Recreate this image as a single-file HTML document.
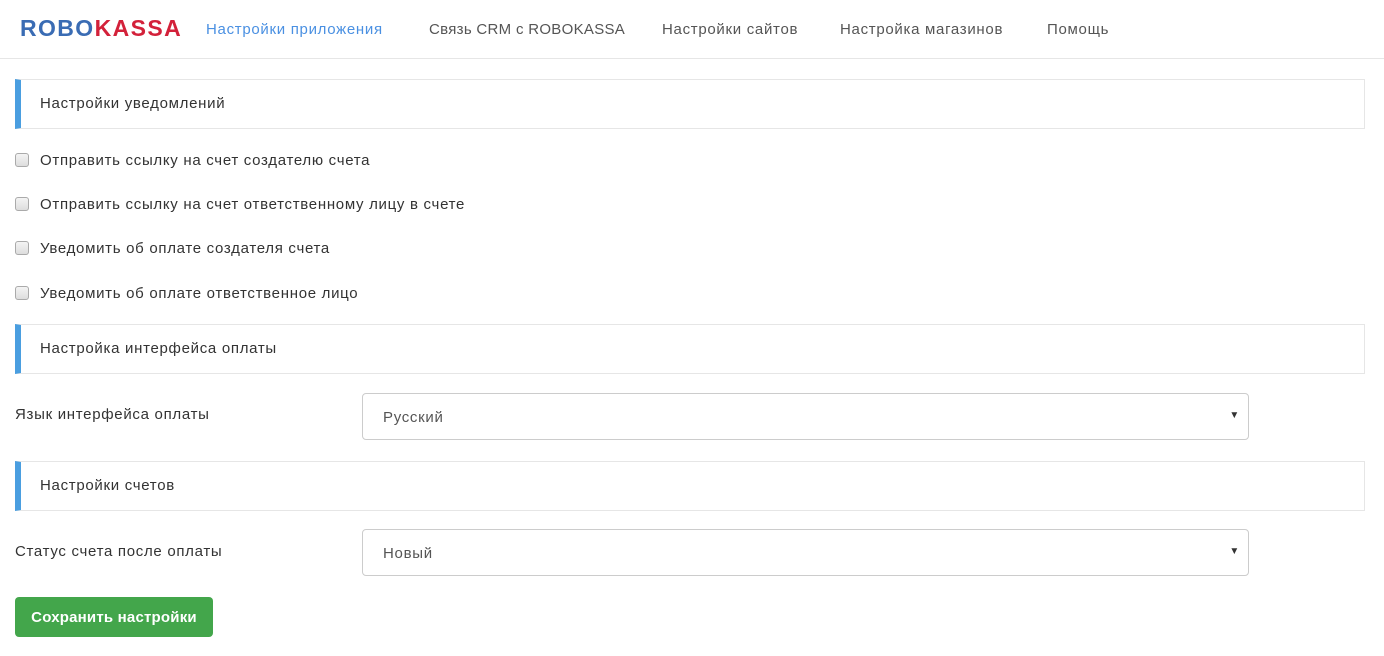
<!DOCTYPE html>
<html><head><meta charset="utf-8"><style>
body{margin:0;width:1384px;height:656px;background:#fff;font-family:"Liberation Sans","DejaVu Sans",sans-serif;color:#333;font-size:15px;letter-spacing:0.7px;position:relative;overflow:hidden}
.a{position:absolute;white-space:nowrap}
.nav{position:absolute;top:0;left:0;width:1384px;height:58px;border-bottom:1px solid #e6e6e6}
.logo{left:20px;top:15px;font-size:23px;font-weight:bold;letter-spacing:1.4px}
.hd{position:absolute;left:15px;width:1350px;height:50px;border:1px solid #e6e6e6;border-left:6px solid #4a9ee0;box-sizing:border-box}
.hd span{position:absolute;left:19px;top:15px}
.cb{position:absolute;left:15px;width:12px;height:12px;border:1px solid #aaa;border-radius:3px;background:linear-gradient(#f4f4f4,#ddd)}
.sel{position:absolute;left:362px;width:887px;height:47px;border:1px solid #ccc;border-radius:4px;box-sizing:border-box}
.sel span{position:absolute;left:20px;top:15px;color:#555}
.sel i{position:absolute;right:8px;top:16px;font-style:normal;font-size:10px;color:#333}
</style></head><body>
<div class="nav"></div>
<div class="a logo"><span style="color:#3a6cb4">ROBO</span><span style="color:#d3213a">KASSA</span></div>
<div class="a" style="left:206px;top:21px;color:#4a90e2">Настройки приложения</div>
<div class="a" style="left:429px;top:21px;color:#555;letter-spacing:0.3px">Связь CRM с ROBOKASSA</div>
<div class="a" style="left:662px;top:21px;color:#555">Настройки сайтов</div>
<div class="a" style="left:840px;top:21px;color:#555">Настройка магазинов</div>
<div class="a" style="left:1047px;top:21px;color:#555">Помощь</div>

<div class="hd" style="top:79px"><span>Настройки уведомлений</span></div>
<div class="cb" style="top:153px"></div><div class="a" style="left:40px;top:152px">Отправить ссылку на счет создателю счета</div>
<div class="cb" style="top:197px"></div><div class="a" style="left:40px;top:196px">Отправить ссылку на счет ответственному лицу в счете</div>
<div class="cb" style="top:241px"></div><div class="a" style="left:40px;top:240px">Уведомить об оплате создателя счета</div>
<div class="cb" style="top:286px"></div><div class="a" style="left:40px;top:285px">Уведомить об оплате ответственное лицо</div>

<div class="hd" style="top:324px"><span>Настройка интерфейса оплаты</span></div>
<div class="a" style="left:15px;top:406px">Язык интерфейса оплаты</div>
<div class="sel" style="top:393px"><span>Русский</span><i>▼</i></div>

<div class="hd" style="top:461px"><span>Настройки счетов</span></div>
<div class="a" style="left:15px;top:543px">Статус счета после оплаты</div>
<div class="sel" style="top:529px"><span>Новый</span><i>▼</i></div>

<div class="a" style="left:15px;top:597px;width:198px;height:40px;background:#43a64b;border-radius:4px;color:#fff;font-weight:bold;text-align:center;line-height:41px;letter-spacing:0.2px">Сохранить настройки</div>
</body></html>
